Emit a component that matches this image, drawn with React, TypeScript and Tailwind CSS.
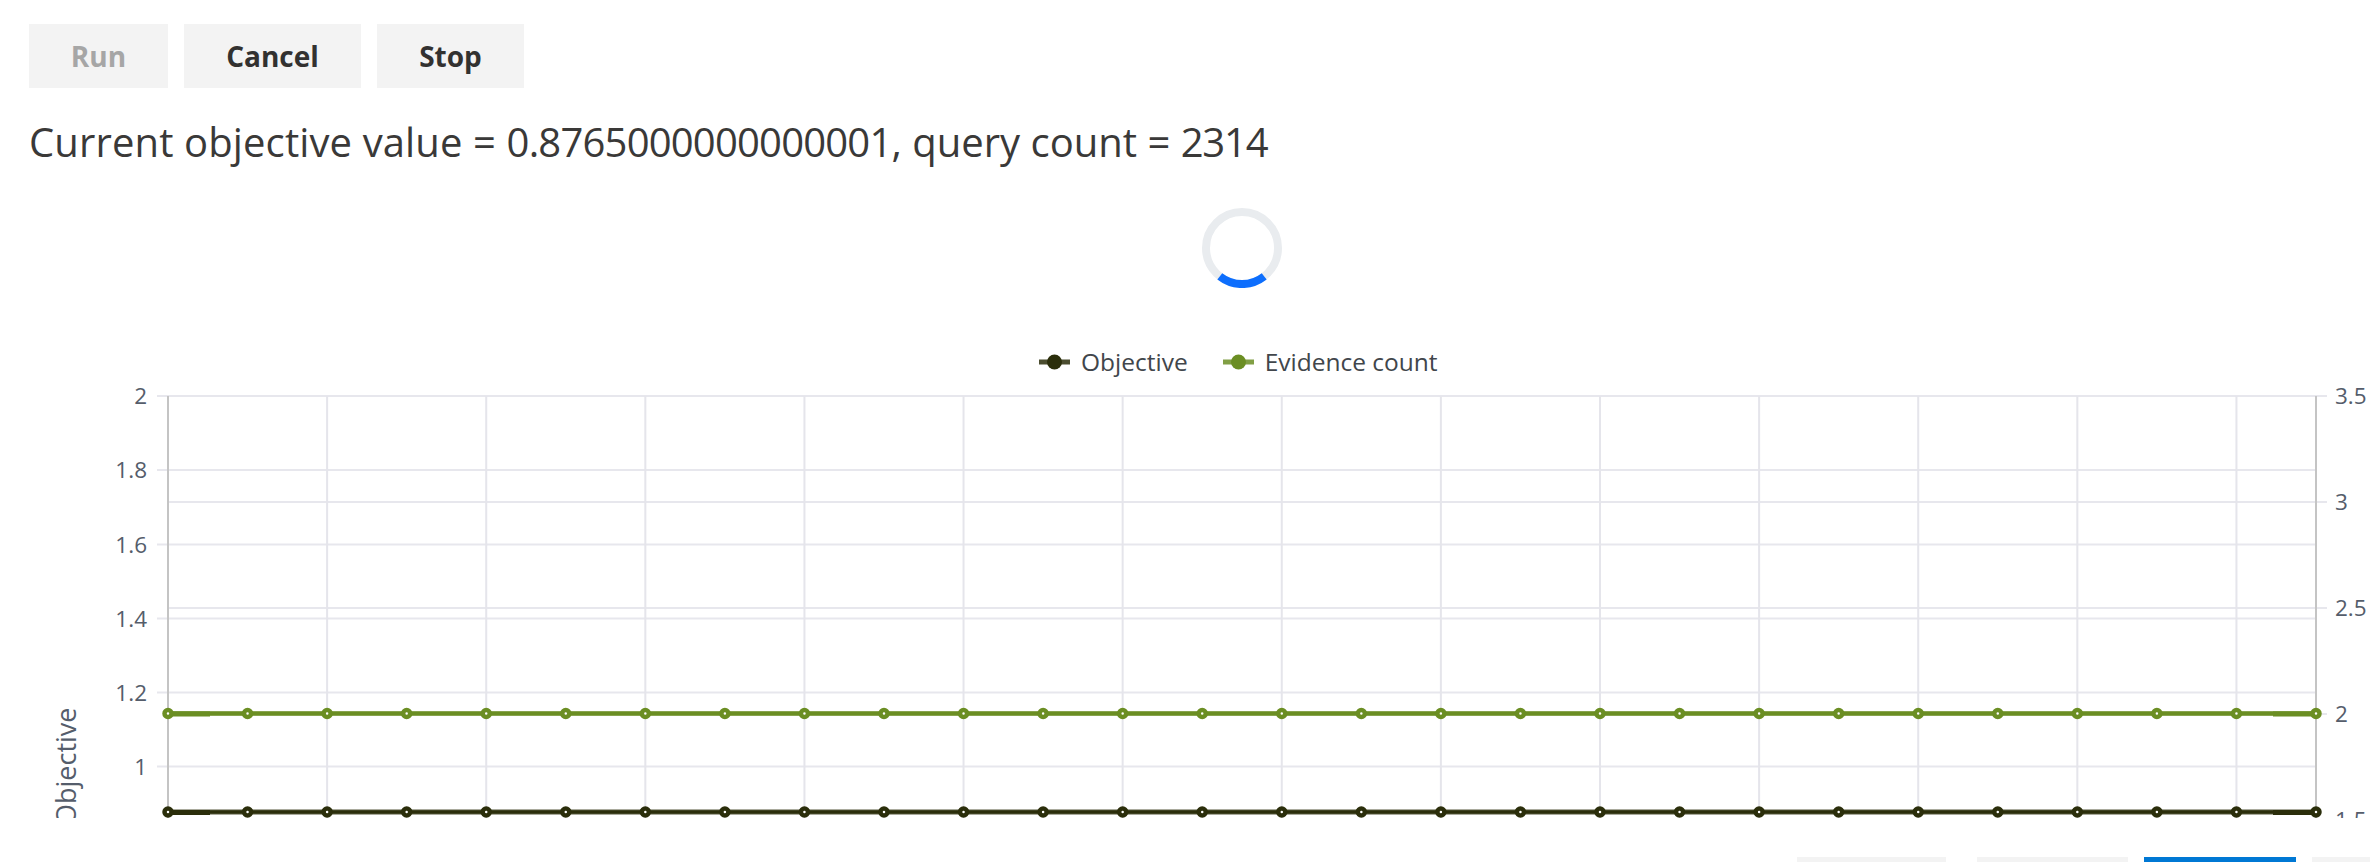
import React from 'react';

const POINTS = Array.from({ length: 28 }, (_, i) => 168 + i * (2148 / 27));
const V_GRID = Array.from({ length: 14 }, (_, i) => 168 + i * (2148 / 13.5));
// chart svg starts at y=340 in the page
const TOP = 340;
const LEFT_TICKS = [
  { label: '2', y: 396 },
  { label: '1.8', y: 470 },
  { label: '1.6', y: 544.5 },
  { label: '1.4', y: 618.5 },
  { label: '1.2', y: 692.5 },
  { label: '1', y: 766.5 },
];
const RIGHT_TICKS = [
  { label: '3.5', y: 396 },
  { label: '3', y: 502 },
  { label: '2.5', y: 608 },
  { label: '2', y: 714 },
  { label: '1.5', y: 820 },
];
const SERIES = [
  { color: '#6b8e23', y: 713.5 },
  { color: '#2b2e0b', y: 812 },
];

const Spinner = () => (
  <svg width="80" height="80" viewBox="0 0 80 80">
    <circle cx="40" cy="40" r="36" fill="none" stroke="#e9ecef" strokeWidth="8" />
    <path d="M17.8 68.4 A36 36 0 0 0 62.2 68.4" fill="none" stroke="#0d6efd" strokeWidth="8" />
  </svg>
);

const LegendKey = ({ color }: { color: string }) => (
  <svg width="31" height="16" viewBox="0 0 31 16">
    <rect x="0" y="5.5" width="31" height="5" fill={color} opacity="0.85" />
    <circle cx="15.5" cy="8" r="7.5" fill={color} />
  </svg>
);

const Chart = () => (
  <svg width="2370" height="478" viewBox={`0 ${TOP} 2370 478`} className="block font-['Open_Sans',sans-serif]">
    {LEFT_TICKS.map((t) => (
      <line key={t.label} x1="157" x2="2316" y1={t.y} y2={t.y} stroke="#e7e7ed" strokeWidth="2" />
    ))}
    {RIGHT_TICKS.map((t) => (
      <line key={t.label} x1="168" x2="2327" y1={t.y} y2={t.y} stroke="#e7e7ed" strokeWidth="2" />
    ))}
    {V_GRID.slice(1).map((x) => (
      <line key={x} x1={x} x2={x} y1="396" y2="818" stroke="#e5e5eb" strokeWidth="2" />
    ))}
    <line x1="168" x2="168" y1="396" y2="818" stroke="#c4c4c4" strokeWidth="2" />
    <line x1="2316" x2="2316" y1="396" y2="818" stroke="#c4c4c4" strokeWidth="2" />

    {LEFT_TICKS.map((t) => (
      <text key={t.label} x="147" y={t.y + 8} textAnchor="end" fontSize="22.5" fill="#555d6b">
        {t.label}
      </text>
    ))}
    {RIGHT_TICKS.map((t) => (
      <text key={t.label} x="2335" y={t.y + 8} fontSize="22.5" fill="#555d6b">
        {t.label}
      </text>
    ))}
    <text transform="translate(76 825) rotate(-90)" fontSize="27" fill="#555d6b">
      Objective
    </text>

    {SERIES.map((s) => (
      <g key={s.y}>
        <line x1="168" x2="2316" y1={s.y} y2={s.y} stroke={s.color} strokeWidth="5" opacity="0.8" />
        <line x1="168" x2="2316" y1={s.y} y2={s.y} stroke={s.color} strokeWidth="3" />
        <line x1="168" x2="210" y1={s.y + 0.5} y2={s.y + 0.5} stroke={s.color} strokeWidth="5" />
        <line x1="2273" x2="2316" y1={s.y + 0.5} y2={s.y + 0.5} stroke={s.color} strokeWidth="5" />
        {POINTS.map((x) => (
          <circle key={x} cx={x} cy={s.y} r="3.5" fill="#ffffff" stroke={s.color} strokeWidth="4.5" />
        ))}
      </g>
    ))}
  </svg>
);

export default function App() {
  return (
    <div className="relative h-[862px] w-[2370px] overflow-hidden bg-white font-['Open_Sans',sans-serif] text-[#323130]">
      <div className="flex gap-4 pl-[29px] pt-6">
        <button disabled className="h-16 w-[139px] bg-[#f3f3f3] text-[28px] font-bold text-[#a6a6a6]">Run</button>
        <button className="h-16 w-[177px] bg-[#f3f3f3] text-[28px] font-bold">Cancel</button>
        <button className="h-16 w-[147px] bg-[#f3f3f3] text-[28px] font-bold">Stop</button>
      </div>

      <div className="mt-8 pl-[29px] text-[40px] leading-[44px] text-[#3a3938]">
        <span className="tracking-[0.12px]">Current objective value = </span>
        <span className="tracking-[-0.8px]">0.8765000000000001</span>, query count = <span className="tracking-[-1.2px]">2314</span>
      </div>

      <div className="mt-[44px] flex justify-center pl-[114px]">
        <Spinner />
      </div>

      <div className="relative mt-[52px] h-[478px]">
        <Chart />
        <div className="absolute left-[1039px] top-[6px] flex items-center text-[24.5px] leading-8 text-[#41464b]">
          <LegendKey color="#2b2e0b" />
          <span className="ml-[11px]">Objective</span>
          <span className="ml-[35px]"><LegendKey color="#6b8e23" /></span>
          <span className="ml-[11px]">Evidence count</span>
        </div>
      </div>

      <div className="mt-[39px] flex gap-4 pl-[1797px]">
        <div className="mr-[15px] h-10 w-[149px] shrink-0 bg-[#f3f3f3]" />
        <div className="h-10 w-[151px] shrink-0 bg-[#f3f3f3]" />
        <div className="h-10 w-[152px] shrink-0 bg-[#0078d4]" />
        <div className="h-10 w-[80px] shrink-0 bg-[#f3f3f3]" />
      </div>
    </div>
  );
}
